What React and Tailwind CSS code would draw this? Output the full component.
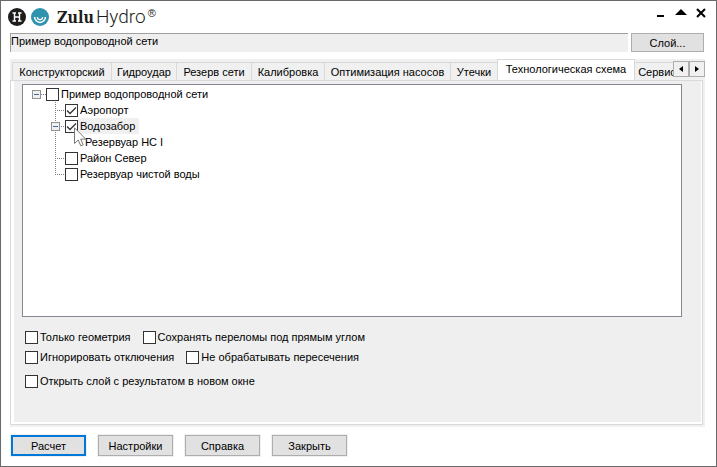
import { useState } from 'react';

const tabs = [
  { name: 'Конструкторский', width: 'w-[100px]' },
  { name: 'Гидроудар', width: 'w-[66px]' },
  { name: 'Резерв сети', width: 'w-[76px]' },
  { name: 'Калибровка', width: 'w-[74px]' },
  { name: 'Оптимизация насосов', width: 'w-[127px]' },
  { name: 'Утечки', width: 'w-[48px]' },
  { name: 'Технологическая схема', width: 'w-[138px]' },
  { name: 'Сервис', width: 'w-[46px]' },
];

const CheckBox = ({ label, defaultChecked = false, selected = false }) => (
  <label className="flex items-center whitespace-nowrap">
    <span className="grid shrink-0">
      <input
        type="checkbox"
        defaultChecked={defaultChecked}
        className="peer col-start-1 row-start-1 h-[13px] w-[13px] appearance-none border border-[#333] bg-white"
      />
      <svg
        viewBox="0 0 13 13"
        className="pointer-events-none invisible col-start-1 row-start-1 h-[13px] w-[13px] peer-checked:visible"
        fill="none"
        stroke="#333"
        strokeWidth="1.3"
      >
        <path d="M2 6.5 5 9.5 11 3.5" />
      </svg>
    </span>
    <span className={`flex h-4 items-center pl-0.5 pr-1 ${selected ? 'bg-[#f0f0f0]' : ''}`}>{label}</span>
  </label>
);

const Expander = ({ open, onClick }) => (
  <button
    type="button"
    onClick={onClick}
    aria-label={open ? 'Свернуть' : 'Развернуть'}
    className="h-[9px] w-[9px] shrink-0"
  >
    <svg viewBox="0 0 9 9" className="block h-[9px] w-[9px]">
      <rect x="0.5" y="0.5" width="8" height="8" fill="#f0f0f0" stroke="#919191" />
      <path d={open ? 'M2 4.5h5' : 'M2 4.5h5M4.5 2v5'} stroke="#4b63a7" />
    </svg>
  </button>
);

// Dotted guide lines on the left of a nested tree row
const Guide = ({ d }) => (
  <svg viewBox="0 0 19 16" className="col-start-1 row-start-1 h-4 w-[19px]" fill="none">
    <path d={d} stroke="#808080" strokeDasharray="1 1" />
  </svg>
);

const TEE = 'M9.5 0v16M11 8.5h8';
const CORNER = 'M9.5 0v9M11 8.5h8';
const LINE = 'M9.5 0v16';

const Cursor = () => (
  <svg viewBox="0 0 13 20" className="pointer-events-none absolute left-[28px] top-[9px] h-5 w-[13px]">
    <path
      d="M.5 .8V16.5L4.2 13 6.8 18.8 9.2 17.8 6.7 12.1H11.8Z"
      fill="#fff"
      stroke="#777"
    />
  </svg>
);

const Tree = () => {
  const [rootOpen, setRootOpen] = useState(true);
  const [intakeOpen, setIntakeOpen] = useState(true);

  return (
    <div className="h-[233px] border border-[#828790] bg-white py-px pl-[9px]">
      <div className="flex h-4 items-center">
        <Expander open={rootOpen} onClick={() => setRootOpen(!rootOpen)} />
        <span className="w-[5px] border-t border-dotted border-[#808080]"></span>
        <CheckBox label="Пример водопроводной сети" />
      </div>

      {rootOpen && (
        <ul className="pl-[14px]">
          <li className="flex h-4 items-center">
            <Guide d={TEE} />
            <CheckBox label="Аэропорт" defaultChecked />
          </li>
          <li className="relative flex h-4 items-center">
            <span className="grid items-center">
              <Guide d={TEE} />
              <span className="col-start-1 row-start-1 flex pl-[5px]">
                <Expander open={intakeOpen} onClick={() => setIntakeOpen(!intakeOpen)} />
              </span>
            </span>
            <CheckBox label="Водозабор" defaultChecked selected />
            <Cursor />
          </li>
          {intakeOpen && (
            <li className="flex h-4 items-center">
              <Guide d={LINE} />
              <span className="pl-5">Резервуар НС I</span>
            </li>
          )}
          <li className="flex h-4 items-center">
            <Guide d={TEE} />
            <CheckBox label="Район Север" />
          </li>
          <li className="flex h-4 items-center">
            <Guide d={CORNER} />
            <CheckBox label="Резервуар чистой воды" />
          </li>
        </ul>
      )}
    </div>
  );
};

const PushButton = ({ children, primary = false }) => (
  <button
    type="button"
    className={`h-[21px] w-[75px] outline outline-[#f0f0f0] bg-[#e1e1e1] ${
      primary ? 'border-2 border-[#0078d7]' : 'border border-[#adadad]'
    }`}
  >
    {children}
  </button>
);

const TitleBar = () => (
  <header className="flex h-8 items-center justify-between pl-[7px] pr-[10px]">
    <div className="flex items-center">
      <svg viewBox="0 0 18 18" className="h-[18px] w-[18px]">
        <circle cx="9" cy="9" r="9" fill="#1d1d1b" />
        <path d="M4.5 5h3.5M10 5h3.5M4.5 13h3.5M10 13h3.5M6.5 5v8M11.5 5v8M6.5 9h5" stroke="#fff" strokeWidth="1.4" />
      </svg>
      <svg viewBox="0 0 18 18" className="ml-[5px] h-[18px] w-[18px]" fill="none">
        <circle cx="9" cy="9" r="9" fill="#2f93ad" />
        <path d="M3.6 9a5.4 5.4 0 0 0 10.8 0" stroke="#fff" strokeWidth="1.5" />
        <path d="M6.4 9a2.6 2.6 0 0 0 5.2 0" stroke="#fff" strokeWidth="1.2" />
      </svg>
      <h1 className="ml-2 flex items-baseline text-[#1d1d1b]">
        <span className="font-['DejaVu_Serif_Condensed','DejaVu_Serif',serif] text-base font-bold leading-6">Zulu</span>
        <span className="ml-0.5 font-[Roboto,sans-serif] text-[19px] font-light leading-6">Hydro</span>
        <sup className="ml-0.5 font-['Liberation_Sans',sans-serif] text-[11px]">®</sup>
      </h1>
    </div>
    <div className="mb-[6px] flex items-center gap-[9px]">
      <button type="button" aria-label="Свернуть окно">
        <svg viewBox="0 0 10 12" className="block h-3 w-[10px]">
          <path d="M1 7h7v2H1z" />
        </svg>
      </button>
      <button type="button" aria-label="Развернуть окно">
        <svg viewBox="0 0 12 12" className="block h-3 w-3">
          <path d="M6 1 12 7H0z" />
        </svg>
      </button>
      <button type="button" aria-label="Закрыть окно">
        <svg viewBox="0 0 10 12" className="block h-3 w-[10px]">
          <path d="M1 1l8 8M9 1l-8 8" stroke="#000" strokeWidth="2" />
        </svg>
      </button>
    </div>
  </header>
);

const App = () => {
  const [active, setActive] = useState(6);

  return (
    <main className="flex min-h-screen flex-col border border-[#696969] bg-white font-['Liberation_Sans',sans-serif] text-[11px] leading-4 text-black">
      <TitleBar />

      {/* Layer */}
      <div className="flex items-center gap-[3px] pl-[9px] pr-3">
        <input
          readOnly
          aria-label="Слой"
          value="Пример водопроводной сети"
          className="h-[19px] min-w-0 flex-1 border-l border-t border-[#a0a0a0] bg-[#efefef] pb-1 outline-none"
        />
        <button type="button" className="h-[19px] w-[73px] border border-[#adadad] bg-[#e1e1e1]">
          Слой...
        </button>
      </div>

      {/* Tabs */}
      <div className="ml-[9px] mr-[11px] mt-[7px] flex items-end bg-[#f0f0f0] pl-0.5">
        <div role="tablist" className="flex h-[21px] min-w-0 flex-1 items-end overflow-hidden">
          {tabs.map((tab, i) => (
            <button
              key={tab.name}
              type="button"
              role="tab"
              aria-selected={i === active}
              onClick={() => setActive(i)}
              className={`-mr-px shrink-0 whitespace-nowrap border border-b-0 border-[#d9d9d9] ${tab.width} ${
                i === active ? 'z-10 h-[21px] bg-white pb-0.5' : 'h-[18px] bg-[#f0f0f0]'
              }`}
            >
              {tab.name}
            </button>
          ))}
        </div>
        <div className="flex self-start pt-0.5">
          <button type="button" aria-label="Назад" className="flex h-4 w-4 items-center justify-center border border-[#adadad] bg-[#f0f0f0]">
            <svg viewBox="0 0 4 6" className="h-[6px] w-1"><path d="M4 0v6L0 3z" /></svg>
          </button>
          <button type="button" aria-label="Вперёд" className="flex h-4 w-4 items-center justify-center border border-[#adadad] bg-[#f0f0f0]">
            <svg viewBox="0 0 4 6" className="h-[6px] w-1"><path d="M0 0v6l4-3z" /></svg>
          </button>
        </div>
      </div>

      {/* Tab page */}
      <section className="ml-[9px] mr-[11px] flex flex-1 border-b-2 border-r-2 border-[#f0f0f0]">
        <div className="flex flex-1 border border-[#d9d9d9] bg-white pb-0.5 pl-[3px] pr-px">
          <div className="flex-1 bg-[#efefef] pl-2 pr-[19px] pt-[3px]">
            <Tree />
            <div className="mt-[10px] pl-[3px]">
              <div className="flex h-5 items-center gap-2">
                <CheckBox label="Только геометрия" />
                <CheckBox label="Сохранять переломы под прямым углом" />
              </div>
              <div className="flex h-5 items-center gap-2">
                <CheckBox label="Игнорировать отключения" />
                <CheckBox label="Не обрабатывать пересечения" />
              </div>
              <div className="mt-1 flex h-5 items-center">
                <CheckBox label="Открыть слой с результатом в новом окне" />
              </div>
            </div>
          </div>
        </div>
      </section>

      {/* Actions */}
      <footer className="flex gap-3 px-[10px] pb-[10px] pt-2">
        <PushButton primary>Расчет</PushButton>
        <PushButton>Настройки</PushButton>
        <PushButton>Справка</PushButton>
        <PushButton>Закрыть</PushButton>
      </footer>
    </main>
  );
};

export default App;
